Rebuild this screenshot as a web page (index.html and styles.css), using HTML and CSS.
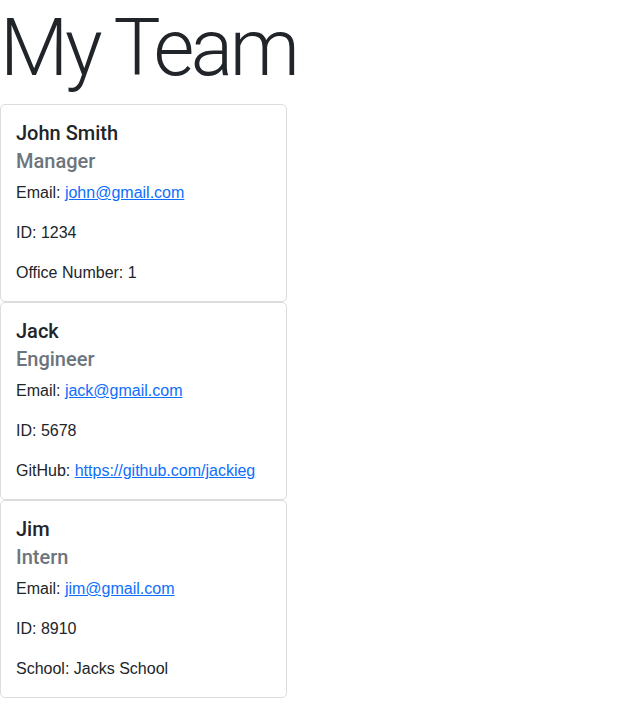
FILE: index.html
```html
<!DOCTYPE html>
<html>
<head>
<meta charset="utf-8">
<title>My Team</title>
<link rel="stylesheet" href="styles.css">
</head>
<body>
<h1 class="page-title">My Team</h1>
<div class="team">
  <div class="card">
    <div class="card-body">
      <h5 class="card-title">John Smith</h5>
      <h6 class="card-subtitle">Manager</h6>
      <p class="card-text">Email: <a href="#">john@gmail.com</a></p>
      <p class="card-text">ID: 1234</p>
      <p class="card-text">Office Number: 1</p>
    </div>
  </div>
  <div class="card">
    <div class="card-body">
      <h5 class="card-title">Jack</h5>
      <h6 class="card-subtitle">Engineer</h6>
      <p class="card-text">Email: <a href="#">jack@gmail.com</a></p>
      <p class="card-text">ID: 5678</p>
      <p class="card-text">GitHub: <a href="#">https://github.com/jackieg</a></p>
    </div>
  </div>
  <div class="card">
    <div class="card-body">
      <h5 class="card-title">Jim</h5>
      <h6 class="card-subtitle">Intern</h6>
      <p class="card-text">Email: <a href="#">jim@gmail.com</a></p>
      <p class="card-text">ID: 8910</p>
      <p class="card-text">School: Jacks School</p>
    </div>
  </div>
</div>
</body>
</html>
```

FILE: styles.css
```css
* { box-sizing: border-box; }
body {
  margin: 0;
  font-family: "Liberation Sans", Arial, sans-serif;
  font-size: 16px;
  line-height: 1.5;
  color: #212529;
  background: #fff;
}
.page-title {
  margin: 0 0 8px 0;
  font-family: Roboto, "Liberation Sans", sans-serif;
  font-size: 79px;
  font-weight: 300;
  line-height: 96px;
  letter-spacing: -3.4px;
}
.team { display: flex; flex-direction: column; }
.card {
  width: 287px;
  border: 1px solid #dcdcdc;
  border-radius: 5px;
  background: #fff;
}
.card-body { padding: 16px 15px; }
.card-title,
.card-subtitle {
  font-family: Roboto, "Liberation Sans", sans-serif;
  font-size: 20px;
  font-weight: 500;
  line-height: 24px;
}
.card-title {
  margin: 0 0 4px 0;
  color: #212529;
}
.card-subtitle {
  margin: 0 0 8px 0;
  color: #6c757d;
}
.card-text { margin: 0 0 16px 0; }
.card-text:last-child { margin-bottom: 0; }
a { color: #0d6efd; text-decoration: underline; }
```
